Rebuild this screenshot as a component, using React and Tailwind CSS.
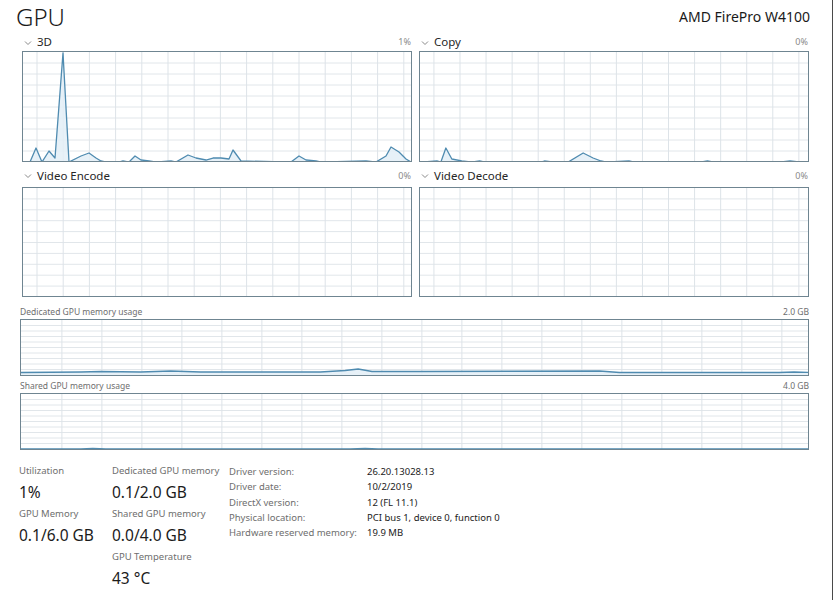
import React from "react";

const font = { fontFamily: '"Noto Sans", "Open Sans", sans-serif' };

const pts3d = [
    [0, 110], [7, 110], [13, 96], [19, 110], [26, 99], [32, 106], [40, 1], [46, 110], [58, 104], [66, 101],
    [73, 106], [78, 109], [83, 110], [96, 110], [100, 109], [106, 110], [112, 104], [118, 108], [126, 109],
    [133, 110], [148, 109], [153, 110], [165, 103], [173, 106], [183, 108], [190, 106], [198, 106], [206, 107],
    [210, 98], [218, 109], [268, 110], [276, 104], [283, 108], [293, 109], [298, 110], [343, 109], [353, 110],
    [363, 104], [368, 95], [376, 100], [383, 107], [388, 110],
];

const ptsCopy = [
    [0, 110], [2, 110], [17, 109], [21, 110], [26, 96], [32, 107], [42, 109], [52, 110], [60, 109], [65, 110],
    [122, 110], [125, 109], [134, 110], [149, 110], [164, 101], [174, 106], [182, 109], [187, 110], [210, 109],
    [215, 110], [282, 110], [289, 109], [295, 110], [362, 110], [372, 109], [382, 110], [390, 110],
];

const ptsDedicated = [
    [0, 52.5], [60, 52], [80, 51.5], [120, 52], [150, 51], [180, 52], [300, 52], [325, 50.5], [338, 49],
    [352, 51.5], [400, 51.5], [580, 51], [600, 52.5], [760, 52.5], [775, 52], [790, 52.5],
];

const ptsShared = [
    [0, 55], [60, 55], [72, 54.3], [85, 55], [330, 55], [345, 54.3], [358, 55], [790, 55],
];

// chart drawing: grid + area + line
const Chart = ({ w, h, points, vStart, vStep, hStep, className }) => {
    const verticals = [];
    for (let x = vStart; x < w; x += vStep) verticals.push(x);
    const horizontals = [];
    for (let y = hStep; y < h - 1; y += hStep) horizontals.push(y);
    const line = points ? points.map((p) => p.join(",")).join(" ") : "";
    const area = points ? `0,${h} ${line} ${w},${h}` : "";

    return (
        <div className={`border border-[#6f8591] bg-white ${className}`}>
            <svg className="block w-full h-full" viewBox={`0 0 ${w} ${h}`} preserveAspectRatio="none">
                {horizontals.map((y) => (
                    <line key={`h${y}`} x1="0" x2={w} y1={y} y2={y} stroke="#e1e6ea" strokeWidth="1" vectorEffect="non-scaling-stroke" />
                ))}
                {verticals.map((x) => (
                    <line key={`v${x}`} x1={x} x2={x} y1="0" y2={h} stroke="#dde3e8" strokeWidth="1" vectorEffect="non-scaling-stroke" />
                ))}
                {points && (
                    <>
                        <polygon points={area} fill="#e3eff7" opacity="0.85" />
                        <polyline points={line} fill="none" stroke="#4f8bb0" strokeWidth="1.3" strokeLinejoin="round" vectorEffect="non-scaling-stroke" />
                    </>
                )}
            </svg>
        </div>
    );
};

const Chevron = () => (
    <svg width="8" height="6" viewBox="0 0 8 6" className="mr-[5px] mt-[1px]">
        <path d="M1 1.5 L4 4.5 L7 1.5" fill="none" stroke="#8a8a8a" strokeWidth="1" />
    </svg>
);

const ChartLabel = ({ name, pct, className }) => (
    <div className={`flex items-center justify-between ${className}`}>
        <div className="flex items-center pl-[2px]">
            <Chevron />
            <span className="text-[11.5px] text-[#262626]">{name}</span>
        </div>
        <span className="text-[9px] text-[#8a8a8a] pr-[1px]">{pct}</span>
    </div>
);

const Stat = ({ label, value }) => (
    <div className="whitespace-nowrap">
        <div className="text-[9.5px] leading-[14px] text-[#6e6e6e]">{label}</div>
        <div className="text-[15.5px] leading-[29px] text-[#1b1b1b]">{value}</div>
    </div>
);

const details = [
    ["Driver version:", "26.20.13028.13"],
    ["Driver date:", "10/2/2019"],
    ["DirectX version:", "12 (FL 11.1)"],
    ["Physical location:", "PCI bus 1, device 0, function 0"],
    ["Hardware reserved memory:", "19.9 MB"],
];

export default function App() {
    return (
        <div style={font} className="w-[833px] h-[600px] bg-white border-r border-[#4a4a4a] overflow-hidden">
            {/* header */}
            <div className="flex justify-between items-start h-[33px] pl-[16px] pr-[22px]">
                <div className="text-[24px] leading-[33px] text-[#1a1a1a] font-light">GPU</div>
                <div className="text-[14px] leading-[16px] mt-[9px] text-[#1a1a1a]">AMD FirePro W4100</div>
            </div>

            {/* engine charts */}
            <div className="grid grid-cols-2 gap-x-[7px] pl-[22px] pr-[23px]">
                <div>
                    <ChartLabel name="3D" pct="1%" className="h-[18px]" />
                    <Chart w={388} h={109} points={pts3d} vStart={14} vStep={26.2} hStep={11} className="h-[111px]" />
                    <ChartLabel name="Video Encode" pct="0%" className="h-[25px] pt-[2px]" />
                    <Chart w={388} h={109} vStart={14} vStep={26.2} hStep={11} className="h-[110px]" />
                </div>
                <div>
                    <ChartLabel name="Copy" pct="0%" className="h-[18px]" />
                    <Chart w={390} h={109} points={ptsCopy} vStart={14} vStep={26.2} hStep={11} className="h-[111px]" />
                    <ChartLabel name="Video Decode" pct="0%" className="h-[25px] pt-[2px]" />
                    <Chart w={390} h={109} vStart={14} vStep={26.2} hStep={11} className="h-[110px]" />
                </div>
            </div>

            {/* memory charts */}
            <div className="pl-[20px] pr-[23px]">
                <div className="flex justify-between items-end h-[22px] text-[8.5px] text-[#6e6e6e]">
                    <span>Dedicated GPU memory usage</span>
                    <span>2.0 GB</span>
                </div>
                <Chart w={789} h={55} points={ptsDedicated} vStart={41} vStep={40.1} hStep={5.5} className="h-[57px]" />
                <div className="flex justify-between items-end h-[17px] text-[8.5px] text-[#6e6e6e]">
                    <span>Shared GPU memory usage</span>
                    <span>4.0 GB</span>
                </div>
                <Chart w={789} h={55} points={ptsShared} vStart={41} vStep={40.1} hStep={5.5} className="h-[57px]" />
            </div>

            {/* stats */}
            <div className="flex pt-[14px] pl-[19px]">
                <div className="w-[93px]">
                    <Stat label="Utilization" value="1%" />
                    <Stat label="GPU Memory" value="0.1/6.0 GB" />
                </div>
                <div className="w-[117px]">
                    <Stat label="Dedicated GPU memory" value="0.1/2.0 GB" />
                    <Stat label="Shared GPU memory" value="0.0/4.0 GB" />
                    <Stat label="GPU Temperature" value="43 °C" />
                </div>
                <div className="text-[9.5px] leading-[15.3px] whitespace-nowrap">
                    {details.map(([k, v]) => (
                        <div key={k} className="flex">
                            <span className="w-[138px] text-[#6e6e6e]">{k}</span>
                            <span className="text-[#1b1b1b]">{v}</span>
                        </div>
                    ))}
                </div>
            </div>
        </div>
    );
}
